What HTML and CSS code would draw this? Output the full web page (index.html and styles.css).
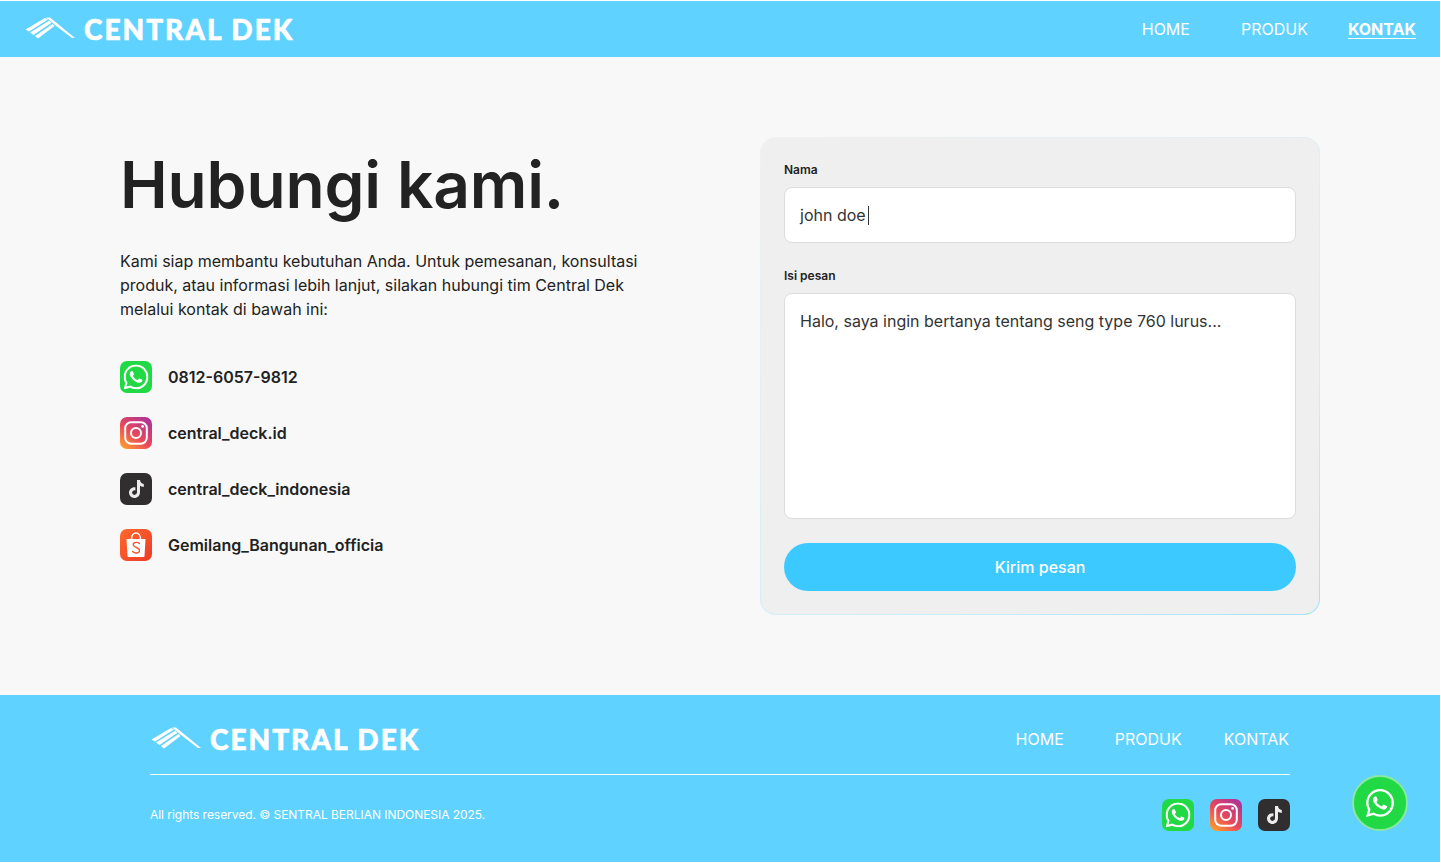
FILE: index.html
```html
<!DOCTYPE html>
<html lang="id">
<head>
  <meta charset="utf-8">
  <title>Kontak - Central Dek</title>
  <link rel="stylesheet" href="styles.css">
</head>
<body>
  <svg class="sprites" width="0" height="0" aria-hidden="true">
    <defs>
      <linearGradient id="ig-grad" x1="0.1" y1="1" x2="0.9" y2="0">
        <stop offset="0" stop-color="#fdA02c"/>
        <stop offset="0.45" stop-color="#e8485c"/>
        <stop offset="1" stop-color="#a8329c"/>
      </linearGradient>
      <linearGradient id="shopee-grad" x1="0" y1="0" x2="1" y2="1">
        <stop offset="0" stop-color="#fe6a2c"/>
        <stop offset="1" stop-color="#ee3a28"/>
      </linearGradient>
      <symbol id="logo-mark" viewBox="0 0 50 24">
        <path fill="#fff" d="M0.500 12.500 L20 1 L23 2.500 L4 14.500 Z M5 15.500 L24 3.800 L26.500 5.800 L8.500 18 Z M10 19 L27.500 7 L29.500 9 L13 21.500 Z"/>
        <path fill="#fff" d="M21 .5 L25 .5 L50 21 L47 21 L30 8 Z"/>
      </symbol>
      <symbol id="wa-glyph" viewBox="0 0 24 24">
        <path fill="#fff" d="M17.47 14.38c-.3-.15-1.76-.87-2.03-.97-.27-.1-.47-.15-.67.15-.2.3-.77.97-.94 1.16-.17.2-.35.22-.64.07-.3-.15-1.26-.46-2.39-1.47-.88-.79-1.48-1.76-1.65-2.06-.17-.3-.02-.46.13-.6.13-.14.3-.35.45-.52.15-.17.2-.3.3-.5.1-.2.05-.37-.03-.52-.07-.15-.67-1.61-.92-2.21-.24-.58-.49-.5-.67-.51h-.57c-.2 0-.52.07-.79.37-.27.3-1.04 1.02-1.04 2.48s1.07 2.88 1.21 3.07c.15.2 2.1 3.2 5.08 4.49.71.3 1.26.49 1.69.62.71.23 1.36.2 1.87.12.57-.09 1.76-.72 2.01-1.41.25-.7.25-1.29.17-1.41-.07-.13-.27-.2-.57-.35zM12.05 21.79h-.01c-1.78 0-3.52-.48-5.05-1.38l-.36-.21-3.75.98 1-3.65-.24-.38a9.87 9.87 0 0 1-1.51-5.26c0-5.45 4.44-9.88 9.89-9.88 2.64 0 5.12 1.03 6.99 2.9a9.83 9.83 0 0 1 2.89 6.99c0 5.45-4.44 9.89-9.89 9.89zM20.46 3.49A11.82 11.82 0 0 0 12.05 0C5.5 0 .16 5.34.16 11.89c0 2.1.55 4.14 1.59 5.95L.06 24l6.31-1.65a11.88 11.88 0 0 0 5.68 1.45h.01c6.55 0 11.89-5.34 11.89-11.89 0-3.18-1.24-6.16-3.49-8.41z"/>
      </symbol>
      <symbol id="icon-wa" viewBox="0 0 32 32">
        <rect width="32" height="32" rx="7" fill="#20d945"/>
        <use href="#wa-glyph" x="3.5" y="3.5" width="25" height="25"/>
      </symbol>
      <symbol id="icon-ig" viewBox="0 0 32 32">
        <rect width="32" height="32" rx="7" fill="url(#ig-grad)"/>
        <rect x="5.2" y="5.2" width="21.6" height="21.6" rx="6" fill="none" stroke="#fff" stroke-width="2"/>
        <circle cx="16" cy="16" r="5" fill="none" stroke="#fff" stroke-width="2"/>
        <circle cx="22.6" cy="9.4" r="1.4" fill="#fff"/>
      </symbol>
      <symbol id="icon-tt" viewBox="0 0 32 32">
        <rect width="32" height="32" rx="7" fill="#312e2f"/>
        <path fill="#ececec" d="M17 7h3c.2 2.3 1.6 3.8 3.8 4v3c-1.5 0-2.8-.5-3.8-1.2v6.4c0 3.4-2.5 5.8-5.6 5.8-3.2 0-5.4-2.5-5.4-5.4 0-3.2 2.7-5.8 6.4-5.4v3.2c-1.8-.4-3.3.7-3.3 2.2 0 1.3 1 2.3 2.3 2.3 1.5 0 2.6-1 2.6-2.8z"/>
      </symbol>
      <symbol id="icon-sp" viewBox="0 0 32 32">
        <rect width="32" height="32" rx="7" fill="url(#shopee-grad)"/>
        <path fill="#fff" d="M6.500 10h19l-1 17c0 .6-.5 1-1 1H8.500c-.5 0-1-.4-1-1z"/>
        <path fill="none" stroke="#fff" stroke-width="1.500" d="M11.500 10c0-3.500 2-6 4.500-6s4.500 2.500 4.500 6"/>
        <path fill="none" stroke="#f4512c" stroke-width="1.300" stroke-linecap="round" d="M19.500 14.500c-1-1-2.300-1.300-3.500-1.200-1.700.100-2.800 1.100-2.800 2.400 0 3 6.300 2.500 6.300 5.800 0 1.400-1.300 2.500-3.200 2.500-1.300 0-2.700-.5-3.700-1.500"/>
      </symbol>
    </defs>
  </svg>

  <header class="topbar">
    <a class="brand" href="#">
      <svg class="brand-mark"><use href="#logo-mark"/></svg>
      <span class="brand-name">CENTRAL DEK</span>
    </a>
    <nav class="topnav">
      <a href="#">HOME</a>
      <a href="#">PRODUK</a>
      <a class="active" href="#">KONTAK</a>
    </nav>
  </header>

  <main class="contact">
    <section class="intro">
      <h1>Hubungi kami.</h1>
      <p>Kami siap membantu kebutuhan Anda. Untuk pemesanan, konsultasi produk, atau informasi lebih lanjut, silakan hubungi tim Central Dek melalui kontak di bawah ini:</p>
      <ul class="channels">
        <li><svg class="icon"><use href="#icon-wa"/></svg>0812-6057-9812</li>
        <li><svg class="icon"><use href="#icon-ig"/></svg>central_deck.id</li>
        <li><svg class="icon"><use href="#icon-tt"/></svg>central_deck_indonesia</li>
        <li><svg class="icon"><use href="#icon-sp"/></svg>Gemilang_Bangunan_officia</li>
      </ul>
    </section>

    <form class="card">
      <label>Nama</label>
      <div class="field field-name">john doe<span class="caret"></span></div>
      <label>Isi pesan</label>
      <div class="field field-msg">Halo, saya ingin bertanya tentang seng type 760 lurus...</div>
      <button type="button">Kirim pesan</button>
    </form>
  </main>

  <footer class="footer">
    <div class="footer-top">
      <a class="brand" href="#">
        <svg class="brand-mark"><use href="#logo-mark"/></svg>
        <span class="brand-name">CENTRAL DEK</span>
      </a>
      <nav class="footnav">
        <a href="#">HOME</a>
        <a href="#">PRODUK</a>
        <a href="#">KONTAK</a>
      </nav>
    </div>
    <div class="footer-bottom">
      <small>All rights reserved. © SENTRAL BERLIAN INDONESIA 2025.</small>
      <div class="socials">
        <svg class="icon"><use href="#icon-wa"/></svg>
        <svg class="icon"><use href="#icon-ig"/></svg>
        <svg class="icon"><use href="#icon-tt"/></svg>
      </div>
    </div>
  </footer>

  <a class="wa-float" href="#"><svg><use href="#wa-glyph"/></svg></a>
</body>
</html>
```

FILE: styles.css
```css
* {
  box-sizing: border-box;
}

html, body {
  margin: 0;
  height: 100%;
  background: #fff;
}

body {
  color: #222;
  font-family: Inter, "Noto Sans", sans-serif;
  padding: 1px 1px 0 0;
}

a {
  color: inherit;
  text-decoration: none;
}

.sprites {
  display: block;
  height: 0;
}

.icon {
  width: 32px;
  height: 32px;
  flex: none;
}

/* header */
.topbar {
  height: 56px;
  background: #5fd2ff;
  color: #fff;
  display: flex;
  align-items: center;
  justify-content: space-between;
  padding: 0 24px;
}

.brand {
  display: flex;
  align-items: center;
  gap: 9px;
}

.brand-mark {
  width: 50px;
  height: 24px;
  margin-left: 1px;
}

.brand-name {
  font-family: Lato, sans-serif;
  font-weight: 900;
  font-size: 28px;
  letter-spacing: 2px;
  line-height: 1;
  -webkit-text-stroke: 0.6px #fff;
  margin-top: -1px;
}

.topnav {
  display: flex;
  gap: 40px;
  font-size: 16px;
}

.topnav a:first-child {
  margin-right: 11px;
}

.topnav .active {
  font-weight: 700;
  text-decoration: underline;
  text-underline-offset: 3px;
}

/* main */
.contact {
  display: flex;
  justify-content: space-between;
  padding: 80px 120px;
  background: #f8f8f8;
}

.intro {
  width: 530px;
}

h1 {
  font-size: 64px;
  font-weight: 600;
  line-height: 77px;
  letter-spacing: -0.15px;
  margin: 9px 0 0;
  color: #222;
}

.intro p {
  font-size: 16px;
  line-height: 24px;
  margin: 26px 0 0;
}

.channels {
  list-style: none;
  margin: 40px 0 0;
  padding: 0;
  display: flex;
  flex-direction: column;
  gap: 24px;
}

.channels li {
  display: flex;
  align-items: center;
  gap: 16px;
  font-weight: 600;
  font-size: 16px;
}

.card {
  width: 560px;
  height: 478px;
  background: linear-gradient(#efefef, #efefef) padding-box,
    linear-gradient(150deg, #f0f1f2 0%, #e2eef4 35%, #cdeefc 70%, #a2e2fd 100%) border-box;
  border: 1px solid transparent;
  border-radius: 16px;
  padding: 23px;
  display: flex;
  flex-direction: column;
}

.card label {
  font-size: 12px;
  font-weight: 600;
  line-height: 18px;
  margin-bottom: 8px;
}

.field {
  background: #fff;
  border: 1px solid #ddd;
  border-radius: 8px;
  font-size: 16px;
  padding: 15px;
  line-height: 24px;
  color: #333;
}

.field-name {
  height: 56px;
  margin-bottom: 24px;
}

.field-msg {
  height: 226px;
  margin-bottom: 24px;
}

.caret {
  display: inline-block;
  width: 1px;
  height: 19px;
  background: #333;
  vertical-align: -4px;
  margin-left: 2px;
}

.card button {
  height: 48px;
  border: 0;
  border-radius: 24px;
  background: #3bc9ff;
  color: #fff;
  font: 500 16px Inter, sans-serif;
}

/* footer */
.footer {
  height: 167px;
  background: #5fd2ff;
  color: #fff;
  padding: 0 150px;
}

.footer-top {
  height: 80px;
  padding-top: 8px;
  display: flex;
  align-items: center;
  justify-content: space-between;
  border-bottom: 1px solid #fff;
}

.footer-top .brand-name {
  margin-top: 1px;
}

.footnav {
  display: flex;
  gap: 42px;
  font-size: 16px;
  margin-right: 1px;
}

.footnav a:first-child {
  margin-right: 9px;
}

.footer-bottom {
  display: flex;
  align-items: center;
  justify-content: space-between;
  padding-top: 24px;
}

.footer-bottom small {
  font-size: 12px;
  letter-spacing: -0.04px;
  padding-bottom: 2px;
}

.socials {
  display: flex;
  gap: 16px;
}

.wa-float {
  position: fixed;
  left: 1352px;
  top: 775px;
  width: 56px;
  height: 56px;
  border-radius: 50%;
  background: #20d945;
  border: 2px solid #8ae8a0;
  display: flex;
  align-items: center;
  justify-content: center;
}

.wa-float svg {
  width: 28px;
  height: 28px;
}
```
